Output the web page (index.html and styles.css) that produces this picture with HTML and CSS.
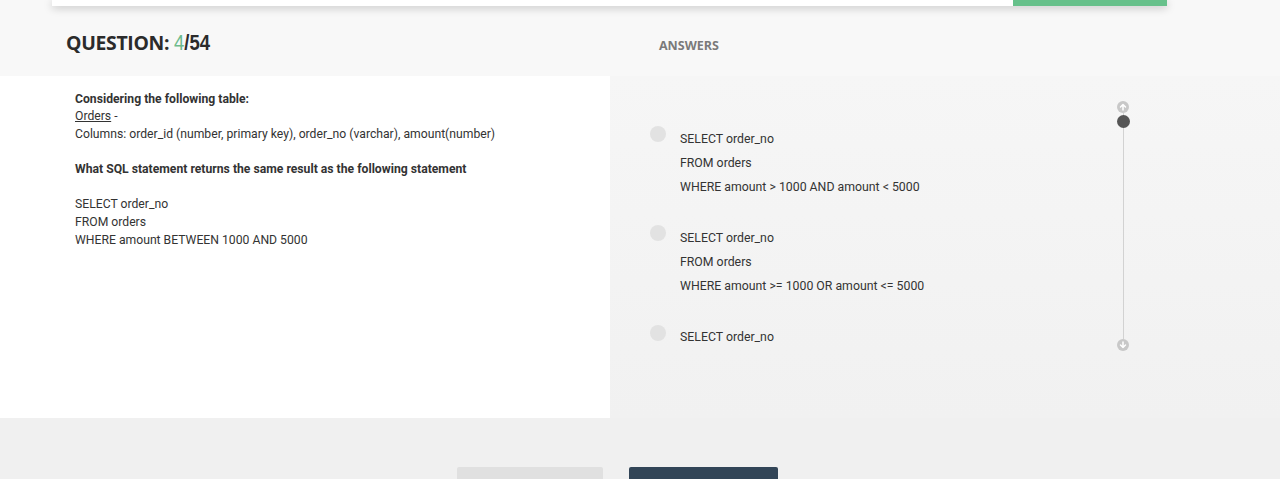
FILE: index.html
```html
<!DOCTYPE html>
<html>
<head>
<meta charset="utf-8">
<link rel="stylesheet" href="styles.css">
</head>
<body>
<div class="topbar">
  <div class="topbar-fill"></div>
  <div class="topbar-green"></div>
</div>
<div class="header">
  <div class="header-left">
    <h1 class="qtitle">QUESTION: <span class="qnum"><span class="qcur">4</span>/54</span></h1>
  </div>
  <div class="header-right">
    <h2 class="answers-title">ANSWERS</h2>
  </div>
</div>
<div class="main">
  <div class="question">
    <p class="bold">Considering the following table:</p>
    <p><span class="underline">Orders</span> -</p>
    <p>Columns: order_id (number, primary key), order_no (varchar), amount(number)</p>
    <p>&nbsp;</p>
    <p class="bold">What SQL statement returns the same result as the following statement</p>
    <p>&nbsp;</p>
    <p>SELECT order_no</p>
    <p>FROM orders</p>
    <p>WHERE amount BETWEEN 1000 AND 5000</p>
  </div>
  <div class="answers-panel">
    <div class="answers">
      <div class="answer">
        <span class="radio"></span>
        <div class="answer-text">
          <p>SELECT order_no</p>
          <p>FROM orders</p>
          <p>WHERE amount &gt; 1000 AND amount &lt; 5000</p>
        </div>
      </div>
      <div class="answer">
        <span class="radio"></span>
        <div class="answer-text">
          <p>SELECT order_no</p>
          <p>FROM orders</p>
          <p>WHERE amount &gt;= 1000 OR amount &lt;= 5000</p>
        </div>
      </div>
      <div class="answer">
        <span class="radio"></span>
        <div class="answer-text">
          <p>SELECT order_no</p>
        </div>
      </div>
    </div>
    <div class="scroll">
      <span class="scroll-btn">
        <svg width="12" height="12" viewBox="0 0 12 12"><path d="M6 9V3.5M3.5 6L6 3.5L8.5 6" stroke="#fff" stroke-width="1.5" fill="none" stroke-linecap="round" stroke-linejoin="round"/></svg>
      </span>
      <div class="scroll-track">
        <span class="scroll-thumb"></span>
      </div>
      <span class="scroll-btn">
        <svg width="12" height="12" viewBox="0 0 12 12"><path d="M6 3V8.5M3.5 6L6 8.5L8.5 6" stroke="#fff" stroke-width="1.5" fill="none" stroke-linecap="round" stroke-linejoin="round"/></svg>
      </span>
    </div>
  </div>
</div>
<div class="footer">
  <button class="btn btn-light"></button>
  <button class="btn btn-dark"></button>
</div>
</body>
</html>
```

FILE: styles.css
```css
* { box-sizing: border-box; }
html, body { margin: 0; padding: 0; }
body {
  background: #f8f8f8;
  font-family: Roboto, "Liberation Sans", sans-serif;
  color: #333;
  height: 479px;
  overflow: hidden;
}
p { margin: 0; }

.topbar {
  display: flex;
  margin: 0 113px 0 52px;
  height: 6px;
  box-shadow: 0 2px 8px rgba(0,0,0,0.22);
}
.topbar-fill { flex: 1; background: #fff; }
.topbar-green { width: 154px; background: #67c18b; }

.header {
  display: flex;
  height: 70px;
}
.header-left {
  width: 610px;
  padding: 24px 0 0 66px;
}
.header-right {
  flex: 1;
  padding: 32px 0 0 49px;
}
.qtitle {
  margin: 0;
  font-family: "Open Sans", "Liberation Sans", sans-serif;
  font-weight: 700;
  font-size: 19.4px;
  line-height: 26px;
  color: #2b2b2b;
  letter-spacing: -0.3px;
  white-space: nowrap;
}
.qnum {
  display: inline-block;
  font-family: "Liberation Sans", sans-serif;
  font-weight: 700;
  font-size: 22px;
  transform: scaleX(0.84);
  transform-origin: left center;
  letter-spacing: 0;
}
.qcur { color: #6dbb8c; font-weight: 400; }
.answers-title {
  margin: 0;
  font-family: "Open Sans", "Liberation Sans", sans-serif;
  font-weight: 700;
  font-size: 12.5px;
  line-height: 16px;
  color: #7a7a7a;
}

.main {
  display: flex;
  height: 342px;
}
.question {
  width: 610px;
  background: #fff;
  padding: 14.5px 0 0 75px;
  font-size: 12.2px;
  line-height: 17.65px;
  color: #333;
}
.bold { font-weight: 700; }
.underline { text-decoration: underline; }

.answers-panel {
  flex: 1;
  background: linear-gradient(to bottom, #f6f6f6, #f1f1f1);
  display: flex;
  padding: 50px 0 0 40px;
}
.answers {
  width: 466px;
  display: flex;
  flex-direction: column;
  gap: 26px;
}
.answer {
  display: flex;
  gap: 14px;
}
.radio {
  width: 16px;
  height: 16px;
  border-radius: 50%;
  background: #e2e2e2;
  flex-shrink: 0;
}
.answer-text {
  font-size: 12.3px;
  line-height: 24.3px;
  color: #333;
  padding-top: 0.5px;
}

.scroll {
  display: flex;
  flex-direction: column;
  align-items: center;
  width: 14px;
  margin-top: -25px;
  height: 250px;
}
.scroll-btn {
  width: 12px;
  height: 12px;
  border-radius: 50%;
  background: #c8c8c8;
  display: flex;
  flex-shrink: 0;
}
.scroll-track {
  flex: 1;
  width: 1px;
  background: #d2d2d2;
  position: relative;
}
.scroll-thumb {
  position: absolute;
  top: 2px;
  left: -6px;
  width: 13px;
  height: 13px;
  border-radius: 50%;
  background: #555;
}

.footer {
  background: #f0f0f0;
  height: 61px;
  overflow: hidden;
  display: flex;
  align-items: flex-start;
  gap: 26px;
  padding: 49px 0 0 457px;
}
.btn {
  border: 0;
  padding: 0;
  height: 40px;
  flex-shrink: 0;
  border-radius: 2px;
}
.btn-light { width: 146px; background: #e0e0e0; }
.btn-dark { width: 149px; background: #324557; }
```
